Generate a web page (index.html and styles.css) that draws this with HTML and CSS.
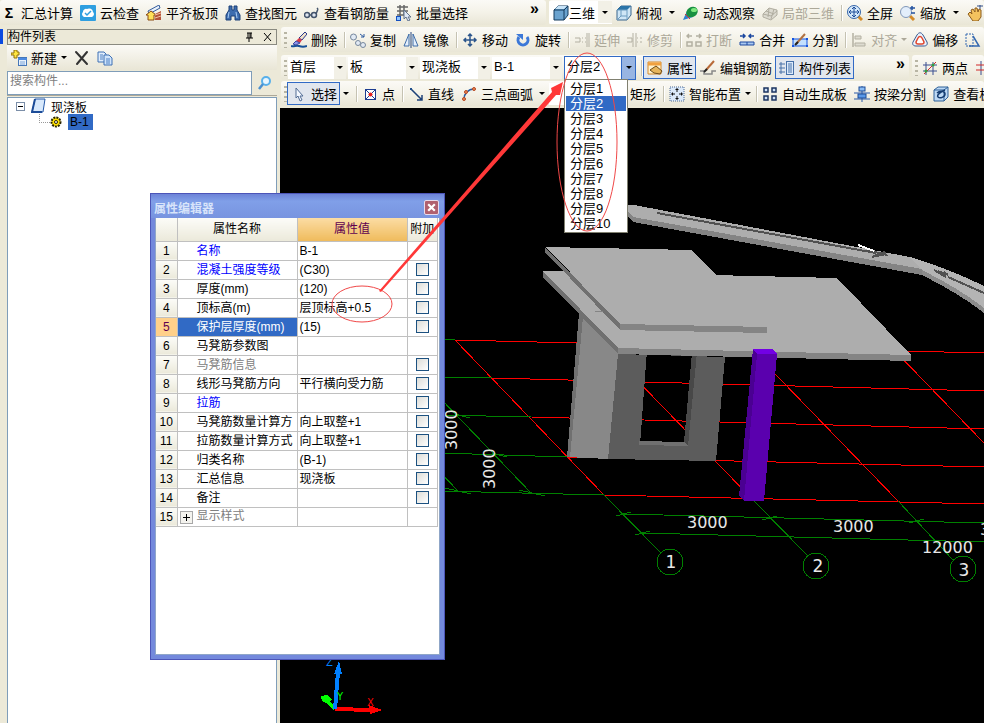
FILE: index.html
```html
<!DOCTYPE html>
<html lang="zh-CN">
<head>
    <meta charset="UTF-8">
    <meta name="viewport" content="width=device-width, initial-scale=1.0">
    <title>构件列表</title>
    <link rel="stylesheet" href="styles.css">
</head>
<body>
<div class="app">

    <div class="row">
        <div class="bar bar-main">
            <button class="item"><span class="sigma">Σ</span>汇总计算</button>
            <button class="item"><svg class="ico" viewBox="0 0 16 16"><rect width="16" height="16" rx="1" fill="#2f9fe0"/><path d="M4 12a3 3 0 0 1-1-5 3 3 0 0 1 4-3 4 4 0 0 1 6 3 3 3 0 0 1-1 5z" fill="#fff"/><path d="M5 8l2 2 4-4" fill="none" stroke="#2f9fe0" stroke-width="1.5"/></svg>云检查</button>
            <button class="item"><svg class="ico" viewBox="0 0 16 16"><path d="M2 6L13 0l1 3L3 9z" fill="#e8f0fa" stroke="#345c9c"/><path d="M0 10l5-4 5 4H8v5H2v-5z" fill="#ffe25a" stroke="#8a4a10"/><path d="M9 9l6-3v9H9z" fill="#b5543a"/><path d="M9 10l6-2M9 13l6-2" stroke="#f0c0a0"/></svg>平齐板顶</button>
            <button class="item"><svg class="ico" viewBox="0 0 16 16"><path d="M4 1h3v4h2V1h3v4l3 5v5h-5v-4H6v4H1v-5l3-5z" fill="#3d6cae" stroke="#1d4078"/><path d="M4 7l-1 6M11 7l1 6" stroke="#a9cdf5"/></svg>查找图元</button>
            <button class="item"><svg class="ico" viewBox="0 0 16 16"><g fill="#dfe6f0" stroke="#44546c" stroke-width="1.5"><circle cx="3" cy="10" r="2.5"/><circle cx="10" cy="10" r="2.5"/><path d="M5 10h3M12 9l2-5M14 4l-1-1" fill="none"/></g></svg>查看钢筋量</button>
            <button class="item"><svg class="ico" viewBox="0 0 16 16"><path d="M1 2h11M1 6h11M1 10h8M4 0v14M8 0v10" stroke="#666" stroke-width="1.5"/><rect x="0.500" y="11.500" width="4" height="4" fill="#8fc4ff" stroke="#1450c0"/><path d="M8 5v9l2-2 2 4 2-1-2-3h3z" fill="#dfe8f5" stroke="#60728c"/></svg>批量选择</button>
            <button class="more">»</button>
        </div>
        <div class="bar bar-view">
            <div class="white">
                <button class="item tight"><svg class="ico" viewBox="0 0 16 16"><path d="M1 5l4-4h10v9l-4 5H1z" fill="#6ba3cf" stroke="#143a5c"/><path d="M2 4l3-3h9l-3 3z" fill="#c8e4f8"/><path d="M1 5h10v10M11 5l4-4" fill="none" stroke="#143a5c"/></svg>三维</button>
                <button class="drop" aria-label="三维选项"></button>
            </div>
            <button class="item"><svg class="ico" viewBox="0 0 16 16"><path d="M1 5l4-4h10v9l-4 5H1z" fill="#cfe6f6" stroke="#38648c"/><path d="M1 5l4-4h10l-4 4z" fill="#2b74a8"/><path d="M1 5h10v10M5 5v6h6M5 11l-4 4" fill="none" stroke="#6c9cc0"/></svg>俯视</button>
            <button class="drop" aria-label="俯视选项"></button>
            <button class="item"><svg class="ico" viewBox="0 0 16 16"><path d="M0 15l4-9 6 6z" fill="#2b7fd0"/><ellipse cx="9" cy="7" rx="6" ry="5" fill="#189040" transform="rotate(-35 9 7)"/><ellipse cx="11" cy="5" rx="3" ry="2" fill="#7fe87f"/><path d="M2 9l5 5" stroke="#d8382c"/></svg>动态观察</button>
            <button class="item" disabled><svg class="ico" viewBox="0 0 16 16"><path d="M1 9l6-6 8 2v5l-6 5-8-3z" fill="#dcdad0" stroke="#b0ada0"/><path d="M4 6l8 3M7 3l-1 9M12 4l-3 10M1 9l8 2 6-5" fill="none" stroke="#b0ada0"/></svg>局部三维</button>
            <span class="sep"></span>
            <button class="item"><svg class="ico" viewBox="0 0 16 16"><path d="M11 11l4 4" stroke="#d38a28" stroke-width="3"/><circle cx="7" cy="7" r="6.500" fill="#d5e9fb" stroke="#3565a8"/><path d="M7 2v10M2 7h10M5 4l2-2 2 2M5 10l2 2 2-2M4 5L2 7l2 2M10 5l2 2-2 2" fill="none" stroke="#1d4c98"/></svg>全屏</button>
            <button class="item"><svg class="ico" viewBox="0 0 16 16"><path d="M10 11l4 4" stroke="#d38a28" stroke-width="3"/><circle cx="6" cy="7" r="5.500" fill="#e3eefb" stroke="#8097b8"/><path d="M10 3h5M12 1v4M11 8h4" stroke="#2352a0" stroke-width="1.5"/></svg>缩放</button>
            <button class="drop" aria-label="缩放选项"></button>
            <button class="item"><svg class="ico" viewBox="0 0 16 16"><path d="M1 9l2-2 2 2-1-4 2-1 2 3V3h2l1 4 1-3 2 1v7l-3 4H6z" fill="#f3c25e" stroke="#8c5c1c"/><path d="M10 1h6M13 0v4" stroke="#334f88"/></svg>平移</button>
        </div>
    </div>

    <div class="main">
        <div class="edge"><span class="edge-mark"></span></div>
        <aside class="side">
            <div class="side-title">
                <span>构件列表</span>
                <button class="mini" aria-label="固定"><svg viewBox="0 0 9 10"><path d="M2 1h5M3 1v5M6 1v5M5 1v5M1 6h7M4 6v4" fill="none" stroke="#000"/></svg></button>
                <button class="mini" aria-label="关闭"><svg viewBox="0 0 9 10"><path d="M1 1l7 8M8 1L1 9" fill="none" stroke="#000"/></svg></button>
            </div>
            <div class="side-tools">
                <button class="item"><svg class="ico" viewBox="0 0 16 16"><path d="M3 0h3v2h2v3H6v3H3V5H0V3h3z" fill="#ffe640" stroke="#90700c"/><rect x="7.500" y="7.500" width="8" height="8" fill="#e8f1fc" stroke="#4677b8"/><path d="M7 9h9" stroke="#4d8ae0" stroke-width="2"/><path d="M9 12h5M9 14h5" stroke="#7ba4d8"/></svg>新建</button>
                <button class="drop small" aria-label="新建选项"></button>
                <button class="item" aria-label="删除构件"><svg class="ico" viewBox="0 0 16 16"><path d="M2 2l11 12M13 2L3 14" stroke="#333" stroke-width="2" stroke-linecap="round"/></svg></button>
                <button class="item" aria-label="复制构件"><svg class="ico" viewBox="0 0 16 16"><path d="M1 2h6l2 2v8H1z" fill="#e0edfc" stroke="#3e70b4"/><path d="M7 5h5l3 3v7H7z" fill="#d0e4fb" stroke="#3e70b4"/><path d="M3 5h3M3 7h3M3 9h3M9 9h4M9 11h4M9 13h4" stroke="#4c80c4"/></svg></button>
            </div>
            <div class="search">
                <input type="text" placeholder="搜索构件..." aria-label="搜索构件">
                <button aria-label="搜索"><svg class="ico" viewBox="0 0 16 16"><circle cx="9" cy="6" r="4" fill="#e8f6ff" stroke="#58b0ea" stroke-width="2"/><path d="M6 9l-4 5" stroke="#4a90d0" stroke-width="2.500"/></svg></button>
            </div>
            <div class="tree">
                <div class="node">
                    <svg class="fold" viewBox="0 0 9 9"><rect x="0.500" y="0.500" width="8" height="8" fill="#fff" stroke="#7b8ea8"/><path d="M2 4.500h5" stroke="#000"/></svg>
                    <svg class="ico" viewBox="0 0 16 16"><path d="M4 1h10l-2 13H1z" fill="#d8e9fc" stroke="#2458a8"/><path d="M4 1L1 14h10" fill="none" stroke="#1c4c98" stroke-width="2"/></svg>
                    <span>现浇板</span>
                </div>
                <div class="node child">
                    <span class="dots"></span>
                    <svg class="gear" viewBox="0 0 12 12"><circle cx="6" cy="6" r="4.500" fill="#ffe000" stroke="#2a2400" stroke-width="2" stroke-dasharray="2 1"/><circle cx="6" cy="6" r="3" fill="#ffe000"/><circle cx="6" cy="6" r="1.500" fill="#fff" stroke="#2a2400"/></svg>
                    <span class="picked">B-1</span>
                </div>
            </div>
        </aside>

        <section class="work">
            <div class="row">
                <div class="bar grow">
                    <span class="grip"></span>
                    <button class="item"><svg class="ico" viewBox="0 0 16 16"><path d="M0 14c3 1 5-1 8 0s5 1 8 0" fill="none" stroke="#16509a" stroke-width="2"/><path d="M14 0l2 2-5 6-3-2z" fill="#f0e0c8" stroke="#28388c"/><path d="M8 6l3 2-2 3-4-2z" fill="#d83848"/><path d="M5 9l4 2-4 2-3-1z" fill="#8c94e8" stroke="#3c48a0"/></svg>删除</button>
                    <span class="sep"></span>
                    <button class="item"><svg class="ico" viewBox="0 0 16 16"><g fill="#e2eaf4" stroke="#76879c"><circle cx="3.500" cy="5" r="3"/><circle cx="8" cy="11" r="2.500"/><circle cx="13" cy="13" r="2.500"/></g><path d="M10 2l4 3M14 2v3h-3" fill="none" stroke="#2c5aa0"/></svg>复制</button>
                    <button class="item"><svg class="ico" viewBox="0 0 16 16"><path d="M6 2v12H1zM10 2v12h5z" fill="#e4effc" stroke="#3e6ca8"/><path d="M8 0v16" stroke="#28477c"/></svg>镜像</button>
                    <span class="sep"></span>
                    <button class="item"><svg class="ico" viewBox="0 0 16 16"><path d="M8 2v12M2 8h12M6 4l2-2 2 2M6 12l2 2 2-2M4 6L2 8l2 2M12 6l2 2-2 2" fill="none" stroke="#2c568c" stroke-width="1.500"/></svg>移动</button>
                    <button class="item"><svg class="ico" viewBox="0 0 16 16"><path d="M4 5a5 5 0 1 0 8 0" fill="none" stroke="#3c78d8" stroke-width="3"/><path d="M1 2h7v6z" fill="#3c78d8"/></svg>旋转</button>
                    <span class="sep"></span>
                    <button class="item" disabled><svg class="ico" viewBox="0 0 16 16"><path d="M1 6h5v4H1M8 6h1M8 10h1M11 6h1M11 10h1M13 1v14M15 1v14" fill="none" stroke="#b3b0a2"/></svg>延伸</button>
                    <button class="item" disabled><svg class="ico" viewBox="0 0 16 16"><path d="M0 6h5v4H0M6 1v14M9 1v14M10 6h1M13 6h2M10 10h1M13 10h2" fill="none" stroke="#b3b0a2"/></svg>修剪</button>
                    <span class="sep"></span>
                    <button class="item" disabled><svg class="ico" viewBox="0 0 16 16"><path d="M1 4h5M10 4h5M3 2L1 4l2 2M13 2l2 2-2 2M1 10h5v4H1zM10 10h5v4h-5z" fill="none" stroke="#b3b0a2" stroke-width="1.500"/></svg>打断</button>
                    <button class="item"><svg class="ico" viewBox="0 0 16 16"><path d="M1 4h5M10 4h5M4 2l2 2-2 2M12 2l-2 2 2 2" fill="none" stroke="#1c48a0" stroke-width="1.500"/><path d="M1 10h14v3H1zM8 10v3" fill="#a9c8f0" stroke="#1c48a0"/></svg>合并</button>
                    <button class="item"><svg class="ico" viewBox="0 0 16 16"><path d="M1 7h14v7H1z" fill="#c3e0ff" stroke="#1454e0"/><path d="M4 12l9-10" stroke="#b07040" stroke-width="2"/><path d="M3 13l3-3" stroke="#222" stroke-width="2"/><path d="M0 6h2v2H0zM14 6h2v2h-2zM0 13h2v2H0zM14 13h2v2h-2z" fill="#1454e0"/></svg>分割</button>
                    <span class="sep"></span>
                    <button class="item" disabled><svg class="ico" viewBox="0 0 16 16"><path d="M2 1v14" stroke="#b3b0a2" stroke-width="1.500"/><path d="M4 4h6v3H4zM4 11h10v3H4z" fill="#dddbd0" stroke="#b3b0a2"/></svg>对齐</button>
                    <button class="drop small off" aria-label="对齐选项" disabled></button>
                    <button class="item"><svg class="ico" viewBox="0 0 16 16"><path d="M5 3c2-3 4-3 6 0l4 7c1 3-1 4-3 4H4c-3 0-4-2-3-4z" fill="#eaf2fc" stroke="#3a5a90"/><path d="M6 6c1-2 3-2 4 0l2 4c0 1-1 2-2 2H6c-1 0-2-1-2-2z" fill="#fff" stroke="#e04830" stroke-width="1.500"/></svg>偏移</button>
                    <button class="item" aria-label="拉伸"><svg class="ico" viewBox="0 0 16 16"><path d="M1 2h7v12H1z" fill="none" stroke="#3468b0" stroke-dasharray="2 1"/><path d="M8 4l6 10H4" fill="none" stroke="#3468b0" stroke-width="1.500"/></svg></button>
                </div>
            </div>

            <div class="row combos">
                <div class="bar bar-pick">
                    <span class="grip"></span>
                    <div class="combo first"><select aria-label="楼层"><option>首层</option></select><span class="drop"></span></div>
                    <div class="combo"><select aria-label="构件类型"><option>板</option></select><span class="drop"></span></div>
                    <div class="combo"><select aria-label="构件"><option>现浇板</option></select><span class="drop"></span></div>
                    <div class="combo"><select aria-label="名称"><option>B-1</option></select><span class="drop"></span></div>
                    <div class="combo open">
                        <select aria-label="分层"><option>分层2</option></select><span class="drop"></span>
                        <ul class="list">
                            <li>分层1</li>
                            <li class="on">分层2</li>
                            <li>分层3</li>
                            <li>分层4</li>
                            <li>分层5</li>
                            <li>分层6</li>
                            <li>分层7</li>
                            <li>分层8</li>
                            <li>分层9</li>
                            <li>分层10</li>
                        </ul>
                    </div>
                    <span class="sep"></span>
                    <button class="item checked"><svg class="ico" viewBox="0 0 16 16"><path d="M1 2h13v12H1z" fill="#fff3d0" stroke="#d88a28"/><path d="M1 4h13" stroke="#f0a040" stroke-width="3"/><path d="M3 10l6-4 6 5-2 3-6-1z" fill="#e6b45c" stroke="#6c4a18"/></svg>属性</button>
                    <button class="item"><svg class="ico" viewBox="0 0 16 16"><path d="M0 11h4v3h8v-3h4" fill="none" stroke="#888" stroke-width="1.500"/><path d="M6 10l8-9" stroke="#b86a38" stroke-width="2"/><path d="M4 12l3-3" stroke="#222" stroke-width="2"/></svg>编辑钢筋</button>
                    <button class="item checked"><svg class="ico" viewBox="0 0 16 16"><path d="M1 3h2v2H1zM1 7h2v2H1zM1 11h2v2H1zM4 4h2M4 8h2M4 12h2" fill="none" stroke="#4670a8"/><rect x="7.500" y="1.500" width="7" height="13" fill="#dceafb" stroke="#4670a8"/><path d="M9 4h4M9 6h4M9 8h4M9 10h4M9 12h4" stroke="#4670a8"/></svg>构件列表</button>
                    <button class="more">»</button>
                </div>
                <div class="bar grow">
                    <span class="grip"></span>
                    <button class="item"><svg class="ico" viewBox="0 0 16 16"><path d="M4 2v13M11 2v13M1 5h14M1 11h14" stroke="#3b4f90"/><path d="M2 14L14 2" stroke="#d02828"/><circle cx="11" cy="5" r="1.500" fill="#30a040"/><circle cx="4" cy="11" r="1.500" fill="#30a040"/></svg>两点</button>
                    <button class="item" aria-label="平行"><svg class="ico" viewBox="0 0 16 16"><path d="M6 1v14M12 1v14" stroke="#3b4f90"/><path d="M1 5h15M1 10h15" stroke="#d02828"/></svg></button>
                </div>
            </div>

            <div class="row">
                <div class="bar grow">
                    <span class="grip"></span>
                    <button class="item checked"><svg class="ico" viewBox="0 0 16 16"><path d="M5 2v10l2-2 2 5 2-1-2-4h3z" fill="#f4f8ff" stroke="#526c94"/></svg>选择</button>
                    <button class="drop" aria-label="选择选项"></button>
                    <span class="sep"></span>
                    <button class="item"><svg class="ico" viewBox="0 0 16 16"><rect x="3.500" y="3.500" width="10" height="10" fill="#fff" stroke="#1c3c90"/><path d="M4 4l9 9M13 4l-9 9" stroke="#1c3c90"/><circle cx="8.500" cy="8.500" r="2" fill="#e02020"/></svg>点</button>
                    <span class="sep"></span>
                    <button class="item"><svg class="ico" viewBox="0 0 16 16"><path d="M3 3l11 11M14 9v5H9" fill="none" stroke="#1c4078" stroke-width="1.500"/><path d="M2 2h2v2H2z" fill="#20508c"/></svg>直线</button>
                    <button class="item"><svg class="ico" viewBox="0 0 16 16"><path d="M3 13c0-5 4-10 10-10" fill="none" stroke="#2c5ca0" stroke-width="1.500"/><circle cx="3" cy="13" r="1.500" fill="#e88858" stroke="#b84820"/><circle cx="5" cy="6" r="1.500" fill="#e88858" stroke="#b84820"/><circle cx="13" cy="3" r="1.500" fill="#e88858" stroke="#b84820"/></svg>三点画弧</button>
                    <button class="drop" aria-label="画弧选项"></button>
                    <select class="blank" aria-label="画弧方式"><option></option></select>
                    <button class="item"><svg class="ico" viewBox="0 0 16 16"><rect x="2.500" y="4.500" width="11" height="8" fill="#e4effc" stroke="#28508c"/></svg>矩形</button>
                    <span class="sep"></span>
                    <button class="item"><svg class="ico" viewBox="0 0 16 16"><rect x="1" y="1" width="14" height="14" fill="#dceafa" stroke="#4a6894" stroke-dasharray="1 1"/><path d="M8 3v3M8 10v3M3 8h3M10 8h3" stroke="#111"/><path d="M8 2l2 2H6zM8 14l2-2H6zM2 8l2-2v4zM14 8l-2-2v4z" fill="#111"/></svg>智能布置</button>
                    <button class="drop small" aria-label="布置选项"></button>
                    <span class="sep"></span>
                    <button class="item"><svg class="ico" viewBox="0 0 16 16"><g fill="#cfe1f8" stroke="#1c3460" stroke-width="1.500"><rect x="2" y="2" width="4" height="4"/><rect x="10" y="2" width="4" height="4"/><rect x="2" y="10" width="4" height="4"/><rect x="10" y="10" width="4" height="4"/></g></svg>自动生成板</button>
                    <button class="item"><svg class="ico" viewBox="0 0 16 16"><path d="M8 0v16M0 7h16M0 13h16" stroke="#2858a8"/><rect x="5" y="1" width="6" height="4" fill="#8bbcf4" stroke="#1c4c98"/><rect x="4" y="8" width="8" height="4" fill="#5a98e8" stroke="#1c4c98"/></svg>按梁分割</button>
                    <button class="item"><svg class="ico" viewBox="0 0 16 16"><path d="M1 4l4-3h10v10l-4 4H1z" fill="#bcd8f4" stroke="#2f6098"/><path d="M1 4h10v11M11 4l4-3" fill="none" stroke="#2f6098"/><path d="M4 7c3-3 8-2 8 1s-5 5-7 3 4-6 7-7" fill="none" stroke="#143c70" stroke-width="1.500"/></svg>查看板</button>
                </div>
            </div>

            <div class="view">
                <svg class="scene" viewBox="280 108 704 615" preserveAspectRatio="xMinYMin slice">
                    <!-- axis grid -->
                    <g stroke="#f00" fill="none">
                        <path d="M455 340L984 353M492 378L984 391M531 417L984 429M567 457L984 467M604 495L984 504"/>
                        <path d="M455 340L604 495M601 343L754 501M750 348L898 501M896 352L984 443"/>
                    </g>
                    <g stroke="#008000" fill="none">
                        <path d="M440 339H455M440 377L492 378M440 415L531 417M440 453L567 457M440 491L604 495"/>
                        <path d="M440 398L532 494M440 472L458 491M604 495L661 553M754 501L808 556M898 501L953 560"/>
                        <path d="M623 514L984 523M642 533L984 542"/>
                        <path d="M616 516l15-4M635 535l15-4M762 520l15-4M909 523l15-4M455 414l15 4M492 453l15 4M519 490l26 6M445 488l26 6"/>
                        <circle cx="670" cy="562" r="13"/>
                        <circle cx="816" cy="566" r="13"/>
                        <circle cx="963" cy="569" r="13"/>
                    </g>
                    <!-- walls -->
                    <path d="M579 313L618 354L608 459L567 457z" fill="#888"/>
                    <path d="M579 313L583 317L570 457L567 457z" fill="#707070"/>
                    <path fill-rule="evenodd" d="M618 354L725 357L716 461L608 459zM647 350L640 445L688 446L696 350z" fill="#5c5c5c"/>
                    <path d="M692 352L697 352L688 446L684 442z" fill="#484848"/>
                    <path d="M639 441L684 442L688 446L639 445z" fill="#707070"/>
                    <!-- slabs -->
                    <path d="M543 271L712 275L837 278L911 355L618 348z" fill="#adadad"/>
                    <path d="M543 271L618 348V354L543 277z" fill="#707070"/>
                    <path d="M618 348L911 355V361L618 354z" fill="#848484"/>
                    <path d="M546 247L692 250L716 275L767 327L620 324z" fill="#adadad"/>
                    <path d="M545 247L620 324V330L545 252z" fill="#707070"/>
                    <path d="M620 324L767 327V333L620 330z" fill="#848484"/>
                    <path d="M595 311h8" stroke="#848484"/>
                    <!-- column -->
                    <path d="M753 349L772 349L777 354L757 354z" fill="#7200e4"/>
                    <path d="M757 354L777 354L764 501L744 501z" fill="#5a00ae"/>
                    <path d="M753 349L757 354L744 501L739 496z" fill="#4a0092"/>
                    <!-- ramp beam -->
                    <path d="M624 205H634L910 257L922 269L633 217L624 208z" fill="#adadad"/>
                    <path d="M624 207L633 217L922 269V275L633 222L624 213z" fill="#848484"/>
                    <path d="M910 257Q950 269 984 286V308Q960 289 922 270z" fill="#b4b4b4"/>
                    <path d="M922 270Q960 289 984 308V313Q960 294 922 275z" fill="#8c8c8c"/>
                    <path d="M657 213L876 253M948 277L984 293" stroke="#505050" stroke-width="2"/>
                    <path d="M868 251l18 3-14 3 12-5 3 4M934 270l12 7-8-6 10 4-4-3" fill="none" stroke="#505050" stroke-width="2"/>
                    <path d="M858 245l16 6" stroke="#fff" stroke-width="2"/>
                    <!-- dimensions -->
                    <g class="dims">
                        <text x="687" y="528">3000</text>
                        <text x="833" y="532">3000</text>
                        <text x="922" y="553">12000</text>
                        <text x="980" y="535">3000</text>
                        <text transform="translate(457 450) rotate(-90)">3000</text>
                        <text transform="translate(495 489) rotate(-90)">3000</text>
                    </g>
                    <g class="marks">
                        <text x="671" y="568">1</text>
                        <text x="818" y="572">2</text>
                        <text x="964" y="576">3</text>
                    </g>
                    <!-- orientation triad -->
                    <path d="M335 709L325 699" stroke="#0f0" stroke-width="4"/>
                    <path d="M321 696l6-1 5 4-4 5-6-3z" fill="#0f0"/>
                    <path d="M335 709L371 710" stroke="#f00" stroke-width="4"/>
                    <path d="M369 705L382 710L370 714z" fill="#f00"/>
                    <path d="M335 709L338 672" stroke="#0080ff" stroke-width="4"/>
                    <path d="M334 674L339 661L342 674z" fill="#0080ff"/>
                    <g class="axes">
                        <text x="326" y="666" fill="#0080ff">Z</text>
                        <text x="337" y="700" fill="#0f0">Y</text>
                        <text x="367" y="706" fill="#f00">X</text>
                    </g>
                </svg>
            </div>
        </section>
    </div>

    <div class="dialog" role="dialog" aria-label="属性编辑器">
        <div class="dialog-title">
            <span>属性编辑器</span>
            <button class="close" aria-label="关闭"><svg viewBox="0 0 10 10"><path d="M2 2l6 6M8 2L2 8" stroke="#fff" stroke-width="2"/></svg></button>
        </div>
        <div class="dialog-body">
            <table>
                <thead>
                    <tr><th class="no"></th><th class="name">属性名称</th><th class="value">属性值</th><th class="extra">附加</th></tr>
                </thead>
                <tbody>
                    <tr><th>1</th><td class="blue">名称</td><td>B-1</td><td></td></tr>
                    <tr><th>2</th><td class="blue">混凝土强度等级</td><td>(C30)</td><td><input type="checkbox" aria-label="附加 混凝土强度等级"></td></tr>
                    <tr><th>3</th><td>厚度(mm)</td><td>(120)</td><td><input type="checkbox" aria-label="附加 厚度"></td></tr>
                    <tr><th>4</th><td>顶标高(m)</td><td>层顶标高+0.5</td><td><input type="checkbox" aria-label="附加 顶标高"></td></tr>
                    <tr class="current"><th>5</th><td>保护层厚度(mm)</td><td>(15)</td><td><input type="checkbox" aria-label="附加 保护层厚度"></td></tr>
                    <tr><th>6</th><td>马凳筋参数图</td><td></td><td></td></tr>
                    <tr><th>7</th><td class="gray">马凳筋信息</td><td></td><td><input type="checkbox" aria-label="附加 马凳筋信息"></td></tr>
                    <tr><th>8</th><td>线形马凳筋方向</td><td>平行横向受力筋</td><td><input type="checkbox" aria-label="附加 线形马凳筋方向"></td></tr>
                    <tr><th>9</th><td class="blue">拉筋</td><td></td><td><input type="checkbox" aria-label="附加 拉筋"></td></tr>
                    <tr><th>10</th><td>马凳筋数量计算方</td><td>向上取整+1</td><td><input type="checkbox" aria-label="附加 马凳筋数量计算方式"></td></tr>
                    <tr><th>11</th><td>拉筋数量计算方式</td><td>向上取整+1</td><td><input type="checkbox" aria-label="附加 拉筋数量计算方式"></td></tr>
                    <tr><th>12</th><td>归类名称</td><td>(B-1)</td><td><input type="checkbox" aria-label="附加 归类名称"></td></tr>
                    <tr><th>13</th><td>汇总信息</td><td>现浇板</td><td><input type="checkbox" aria-label="附加 汇总信息"></td></tr>
                    <tr><th>14</th><td>备注</td><td></td><td><input type="checkbox" aria-label="附加 备注"></td></tr>
                    <tr><th>15</th><td class="gray group"><button class="plus" aria-label="展开"><svg viewBox="0 0 11 11"><path d="M2 5.500h7M5.500 2v7" stroke="#000"/></svg></button>显示样式</td><td></td><td></td></tr>
                </tbody>
            </table>
        </div>
    </div>

    <svg class="notes" viewBox="0 0 984 723" preserveAspectRatio="xMinYMin slice">
        <ellipse cx="587" cy="142" rx="30" ry="89"/>
        <ellipse cx="362" cy="304" rx="30" ry="18"/>
        <path class="arrow" d="M379 291L552 92L551 88L563 82L560 95L556 95L381 292z"/>
    </svg>
</div>
</body>
</html>
```

FILE: styles.css
```css
* {
    box-sizing: border-box;
}

body {
    margin: 0;
    background: #ece9d8;
    color: #000;
    font-family: "Liberation Sans", "Noto Sans CJK SC", sans-serif;
    font-size: 13px;
}

button, input, select {
    font: inherit;
    color: inherit;
    margin: 0;
}

button {
    border: 0;
    padding: 0;
    background: none;
}

.app {
    position: relative;
    display: flex;
    flex-direction: column;
    height: 100vh;
    overflow: hidden;
}

/* toolbars */
.row {
    display: flex;
    flex: none;
    height: 27px;
    padding: 0 0 2px;
    gap: 3px;
}

.bar {
    display: flex;
    align-items: center;
    flex: none;
    border-radius: 3px;
    background: linear-gradient(#fbfaf6, #f4f2e8 50%, #e9e6d6);
    white-space: nowrap;
}

.bar-main {
    width: 546px;
    padding-right: 3px;
}

.bar-main .item {
    padding: 0 6px 0 1px;
}

.bar-view, .grow {
    flex: 1;
    min-width: 0;
    overflow: hidden;
}

.bar-pick {
    width: 628px;
}

.item {
    display: flex;
    flex: none;
    align-items: center;
    gap: 4px;
    height: 23px;
    padding: 0 3px 0 4px;
    white-space: nowrap;
}

.item:disabled {
    color: #aca899;
}

.tight {
    gap: 0;
}

.checked {
    border: 1px solid #316ac5;
    background: #e1e6ee;
    padding: 0 2px 0 3px;
}

.ico {
    display: block;
    flex: none;
    width: 16px;
    height: 16px;
}

.sigma {
    width: 16px;
    text-align: center;
    font-weight: bold;
    font-size: 14px;
}

.sep {
    flex: none;
    width: 2px;
    height: 16px;
    margin-left: 4px;
    border-left: 1px solid #c5c2b2;
    border-right: 1px solid #fff;
}

.grip {
    flex: none;
    width: 3px;
    height: 16px;
    margin: 0 0 0 3px;
    background: repeating-linear-gradient(#b8b5a4 0 2px, transparent 2px 5px);
}

.drop {
    display: flex;
    flex: none;
    align-items: center;
    justify-content: center;
    width: 12px;
    height: 22px;
}

.drop::after {
    content: "";
    border: 3px solid transparent;
    border-top-color: #000;
    border-bottom: 0;
}

.bar-view .drop {
    width: 14px;
}

.drop.small {
    width: 8px;
}

.off::after {
    border-top-color: #aca899;
}

.white {
    display: flex;
    background: #fff;
}

.white .drop {
    background: #f2f0e6;
}

.more {
    margin-left: auto;
    padding: 0 4px 8px;
    font-size: 16px;
    font-weight: bold;
    line-height: 16px;
}

.combos {
    padding: 1px 0;
}

.combo {
    position: relative;
    display: flex;
    flex: none;
    width: 70px;
    height: 22px;
    margin: 0 1px;
    background: #fff;
}

.combo.first {
    width: 58px;
}

.combo select {
    appearance: none;
    flex: 1;
    min-width: 0;
    border: 0;
    padding: 0 0 2px 2px;
    background: #fff;
}

.combo .drop {
    background: #f2f0e6;
}

.combo.open {
    width: 72px;
    height: 24px;
    border: 1px solid #316ac5;
}

.combo.open .drop {
    width: 14px;
    border-left: 1px solid #316ac5;
    background: #98b5e2;
}

.list {
    position: absolute;
    z-index: 5;
    top: 100%;
    left: -1px;
    width: 64px;
    margin: 0;
    padding: 1px;
    border: 1px solid #808070;
    background: #fff;
    list-style: none;
}

.list li {
    height: 15px;
    padding-left: 4px;
    line-height: 15px;
}

.list .on {
    background: #316ac5;
    color: #fff;
}

.blank {
    appearance: none;
    flex: none;
    width: 56px;
    height: 22px;
    margin: 0 1px;
    border: 0;
    background: #fff;
}

/* left panel */
.main {
    display: flex;
    flex: 1;
    min-height: 0;
}

.edge {
    flex: none;
    width: 7px;
    padding-top: 2px;
}

.edge-mark {
    display: block;
    width: 3px;
    height: 15px;
    background: #0a4ae0;
}

.side {
    display: flex;
    flex: none;
    flex-direction: column;
    width: 270px;
    margin-right: 4px;
    padding-top: 2px;
}

.side-title {
    display: flex;
    flex: none;
    align-items: center;
    height: 16px;
    padding-right: 4px;
    border: 1px solid #8a8a80;
    font-size: 12px;
    line-height: 14px;
}

.side-title span {
    flex: 1;
}

.mini {
    width: 9px;
    height: 10px;
    margin-left: 9px;
}

.mini svg, .close svg, .plus svg {
    display: block;
    width: 100%;
}

.side-tools {
    display: flex;
    flex: none;
    align-items: center;
    height: 25px;
    background: linear-gradient(#fbfaf6, #e9e6d6);
}

.side-tools .drop {
    margin-right: 2px;
}

.search {
    display: flex;
    flex: none;
    height: 26px;
    margin-bottom: 1px;
    padding-top: 1px;
    border-bottom: 1px solid #aca899;
}

.search input {
    flex: 1;
    min-width: 0;
    padding: 0 2px 4px;
    border: 1px solid #7f9db9;
    background: #fff;
    font-size: 12px;
}

.search input::placeholder {
    color: #808080;
}

.search button {
    display: flex;
    align-items: center;
    justify-content: center;
    width: 25px;
}

.tree {
    flex: 1;
    padding: 0 0 0 8px;
    border: 1px solid #7f9db9;
    border-bottom: 0;
    background: #fff;
    font-size: 12px;
}

.node {
    display: flex;
    align-items: center;
    height: 16px;
}

.node .fold {
    width: 9px;
    height: 9px;
    margin-right: 6px;
}

.node .ico {
    margin-right: 4px;
}

.child {
    padding-left: 23px;
}

.dots {
    width: 11px;
    height: 9px;
    margin-bottom: 8px;
    border-left: 1px dotted #999;
    border-bottom: 1px dotted #999;
}

.gear {
    width: 12px;
    height: 12px;
    margin-right: 6px;
}

.picked {
    padding: 0 4px 0 2px;
    background: #316ac5;
    line-height: 16px;
}

/* 3D view */
.work {
    display: flex;
    flex: 1;
    flex-direction: column;
    min-width: 0;
}

.view {
    flex: 1;
    min-height: 0;
    margin-left: -1px;
    background: #000;
}

.scene {
    display: block;
    width: 100%;
    height: 100%;
    shape-rendering: crispEdges;
}

.scene text {
    font-family: "DejaVu Sans", sans-serif;
}

.dims {
    font-size: 16px;
    fill: #e8e8e8;
}

.marks {
    font-size: 17px;
    fill: #e8e8e8;
    text-anchor: middle;
}

.axes {
    font-size: 10px;
}

/* property editor */
.dialog {
    position: absolute;
    top: 193px;
    left: 150px;
    display: flex;
    flex-direction: column;
    width: 295px;
    height: 467px;
    padding: 0 4px 4px;
    border: 1px solid #4c55b8;
    background: #7389dc;
    font-size: 12px;
}

.dialog-title {
    display: flex;
    align-items: center;
    justify-content: space-between;
    height: 24px;
    margin: 0 -4px;
    padding: 2px 5px 0 3px;
    background: linear-gradient(#6d83d8, #809fe8 30%, #7894e0);
    color: #d8e4fa;
    font-weight: bold;
}

.close {
    width: 15px;
    height: 15px;
    padding: 1px;
    border: 1px solid #e8dcec;
    border-radius: 2px;
    background: #b0606f;
}

.dialog-body {
    flex: 1;
    padding-right: 1px;
    border: 1px solid #8fa6c8;
    border-top: 0;
    background: #fff;
}

table {
    width: 100%;
    border-collapse: collapse;
    table-layout: fixed;
}

th, td {
    height: 19px;
    padding: 0;
    border: 1px solid #c0c0c0;
    font-weight: normal;
    line-height: 14px;
    white-space: nowrap;
    overflow: hidden;
}

tr > :first-child {
    border-left: 0;
}

th {
    background: linear-gradient(#fcfcf8, #ebe9da);
    text-align: center;
}

thead th {
    height: 23px;
    border-top: 0;
}

.no {
    width: 21px;
}

.name {
    width: 120px;
}

.value {
    width: 110px;
    background: linear-gradient(#fbdca4, #efbb5c);
    color: #600050;
}

td:nth-child(2) {
    padding-left: 19px;
}

td:nth-child(3) {
    padding-left: 2px;
}

td:nth-child(4) {
    text-align: center;
}

.blue {
    color: #00f;
}

.gray {
    color: #808080;
}

.current th {
    background: #ffd08a;
    color: #600050;
}

.current td:nth-child(2) {
    background: #316ac5;
    color: #fff;
}

td input {
    appearance: none;
    display: block;
    width: 13px;
    height: 13px;
    margin: 0 auto;
    border: 1px solid #1c5180;
    background: linear-gradient(135deg, #dcdcd7, #fff);
}

td.group {
    padding-left: 2px;
}

.plus {
    display: inline-block;
    width: 13px;
    height: 13px;
    margin-right: 4px;
    border: 1px solid #a8a8a8;
    background: #f4f3ee;
    vertical-align: middle;
}

/* red mark-up on top of everything */
.notes {
    position: absolute;
    inset: 0;
    z-index: 10;
    width: 100%;
    height: 100%;
    pointer-events: none;
}

.notes ellipse {
    fill: none;
    stroke: #f04848;
}

.notes .arrow {
    fill: #ff3838;
}
```
